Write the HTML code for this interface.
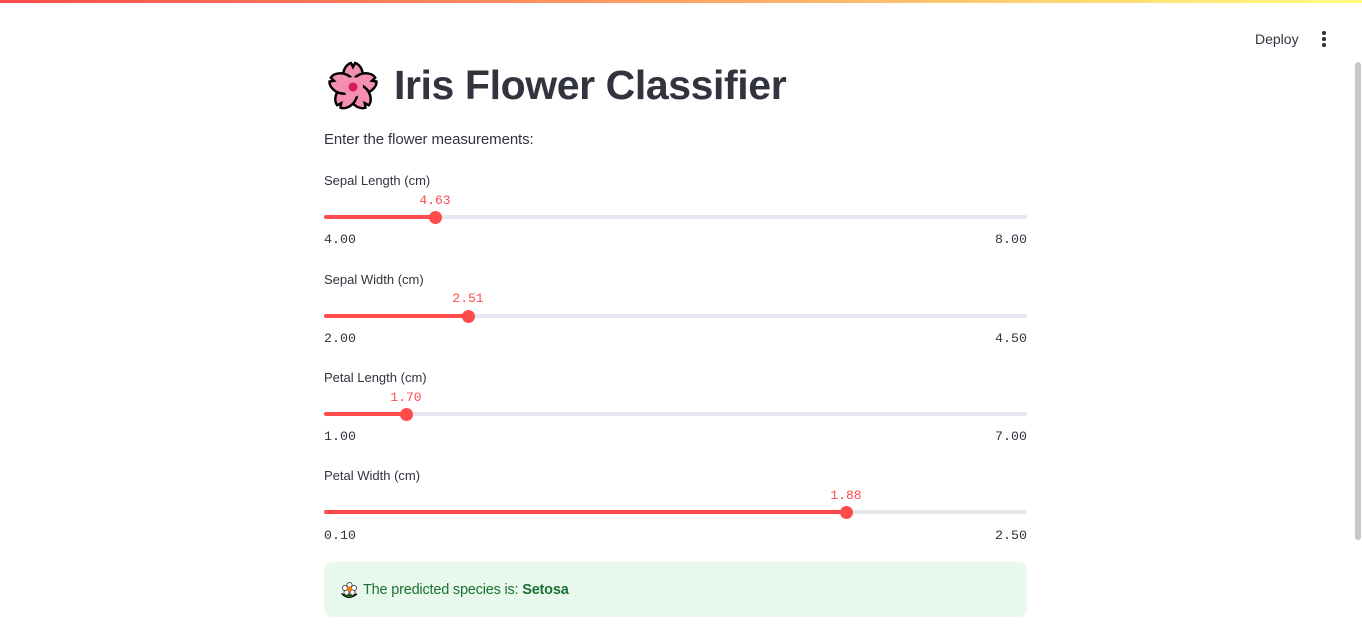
<!DOCTYPE html>
<html><head><meta charset="utf-8"><style>
body{margin:0;width:1362px;height:641px;overflow:hidden;background:#fff;font-family:"Liberation Sans",sans-serif;color:#31333f;position:relative}
.top{position:absolute;left:0;top:0;width:1362px;height:3px;background:linear-gradient(90deg,#ff4b4b,#fffd80)}
.deploy{position:absolute;left:1255px;top:31px;font-size:14px}
.dots{position:absolute;left:1322px;top:31px}
.dots i{display:block;width:3.5px;height:3.5px;background:#31333f;border-radius:50%;margin-bottom:2.5px}
.sb{position:absolute;left:1355px;top:62px;width:6px;height:478px;background:#c8c8c8;border-radius:3px}
h1{position:absolute;left:324px;top:58px;margin:0;font-size:41px;font-weight:700;letter-spacing:-0.4px;line-height:54px}
h1 span{position:absolute;left:70px;white-space:nowrap}
.p{position:absolute;left:324px;top:131px;font-size:15px;letter-spacing:-0.1px}
.lbl{position:absolute;left:324px;font-size:13px}
.val{position:absolute;font-family:"Liberation Mono",monospace;font-size:13px;color:#ff4b4b;transform:translateX(-50%)}
.track{position:absolute;left:324px;width:703px;height:4px;background:#e6e8ef;border-radius:2px}
.fill{position:absolute;left:0;top:0;height:4px;background:#ff4b4b;border-radius:2px}
.th{position:absolute;top:-4.5px;width:13px;height:13px;margin-left:-6.5px;background:#ff4b4b;border-radius:50%}
.mm{position:absolute;font-family:"Liberation Mono",monospace;font-size:13.3px}
.alert{position:absolute;left:324px;top:562px;width:703px;height:55px;background:#e8f8ec;border-radius:8px}
.alert div{position:absolute;left:39px;top:20px;font-size:14.5px;color:#177233;letter-spacing:-0.2px}
</style></head><body>
<div class="top"></div>
<div class="deploy">Deploy</div>
<div class="dots"><i></i><i></i><i></i></div>
<div class="sb"></div>
<h1><svg width="54" height="54" viewBox="0 0 54 54" style="position:absolute;left:2px;top:2px">
<g transform="translate(27,27)" stroke="#000" stroke-width="2.5" fill="#f48fb1">
<g id="pt"><path d="M-8,-4 C-13,-14 -7,-23 -2,-24 L0,-20 L2,-24 C7,-23 13,-14 8,-4 Z"/></g>
<use href="#pt" transform="rotate(72)"/><use href="#pt" transform="rotate(144)"/><use href="#pt" transform="rotate(216)"/><use href="#pt" transform="rotate(288)"/>
<circle r="10" stroke="none"/>
<circle r="4.5" fill="#d81b60" stroke="none"/>
</g></svg><span>Iris Flower Classifier</span></h1>
<div class="p">Enter the flower measurements:</div>

<div class="lbl" style="top:173px">Sepal Length (cm)</div>
<div class="val" style="left:435px;top:193px">4.63</div>
<div class="track" style="top:215px"><div class="fill" style="width:111px"></div><div class="th" style="left:111px"></div></div>
<div class="mm" style="left:324px;top:232px">4.00</div><div class="mm" style="left:995px;top:232px">8.00</div>

<div class="lbl" style="top:272px">Sepal Width (cm)</div>
<div class="val" style="left:468px;top:291px">2.51</div>
<div class="track" style="top:314px"><div class="fill" style="width:144px"></div><div class="th" style="left:144px"></div></div>
<div class="mm" style="left:324px;top:331px">2.00</div><div class="mm" style="left:995px;top:331px">4.50</div>

<div class="lbl" style="top:370px">Petal Length (cm)</div>
<div class="val" style="left:406px;top:390px">1.70</div>
<div class="track" style="top:412px"><div class="fill" style="width:82px"></div><div class="th" style="left:82px"></div></div>
<div class="mm" style="left:324px;top:429px">1.00</div><div class="mm" style="left:995px;top:429px">7.00</div>

<div class="lbl" style="top:468px">Petal Width (cm)</div>
<div class="val" style="left:846px;top:488px">1.88</div>
<div class="track" style="top:510px"><div class="fill" style="width:522px"></div><div class="th" style="left:522px"></div></div>
<div class="mm" style="left:324px;top:528px">0.10</div><div class="mm" style="left:995px;top:528px">2.50</div>

<div class="alert"><svg width="17" height="18" viewBox="0 0 17 18" style="position:absolute;left:17px;top:20px">
<path d="M1,12 Q8,19 16,12 Q8,14 1,12Z" fill="#2e8b20" stroke="#000" stroke-width="1"/>
<g fill="#fff" stroke="#333" stroke-width="0.8"><circle cx="8.5" cy="3" r="2.6"/><circle cx="13" cy="6" r="2.6"/><circle cx="11.5" cy="10.5" r="2.6"/><circle cx="5.5" cy="10.5" r="2.6"/><circle cx="4" cy="6" r="2.6"/></g>
<circle cx="8.5" cy="7" r="2.5" fill="#f57c00"/></svg>
<div>The predicted species is: <b>Setosa</b></div></div>
</body></html>
